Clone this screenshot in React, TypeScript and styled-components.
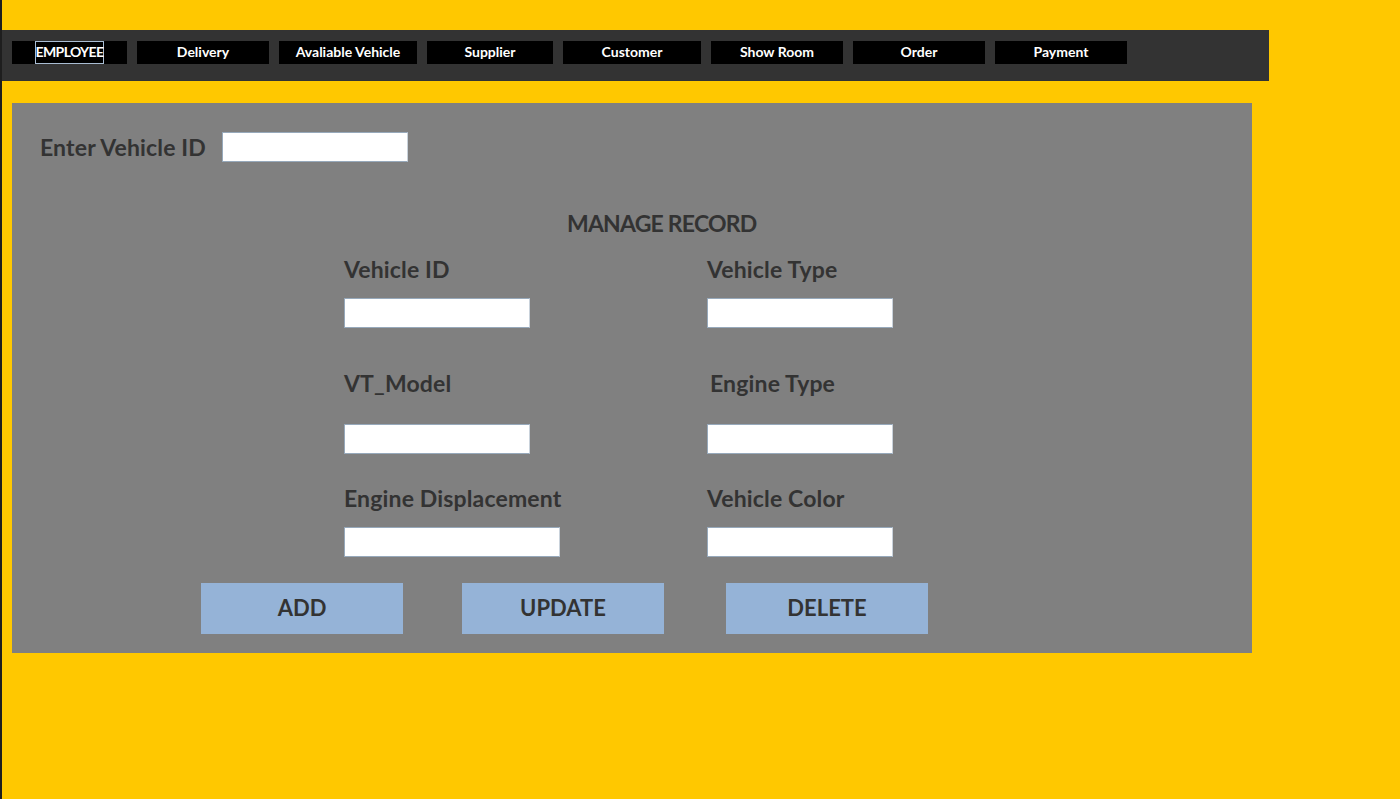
import React from "react";
import styled, { createGlobalStyle } from "styled-components";

const Global = createGlobalStyle`
  html, body { margin: 0; padding: 0; background: #ffffff; }
  body { font-family: Lato, "Open Sans", sans-serif; }
  * { box-sizing: border-box; }
`;

const Page = styled.div`
  display: flex;
  width: 1400px;
  height: 799px;
  overflow: hidden;
`;

const EdgeStrip = styled.div`
  width: 2px;
  height: 100%;
  background: #1e1e1e;
`;

const Canvas = styled.div`
  flex: 1;
  height: 100%;
  background: #ffc800;
  padding-top: 30px;
`;

const TopBar = styled.nav`
  width: 1267px;
  height: 51px;
  background: #333333;
  display: flex;
  align-items: flex-start;
  padding: 11px 0 0 10px;
`;

const NavButton = styled.div<{ $w: number; $ml: number }>`
  width: ${(p) => p.$w}px;
  height: 23px;
  margin-left: ${(p) => p.$ml}px;
  background: #000000;
  color: #ffffff;
  font-family: Lato, sans-serif;
  font-weight: 700;
  font-size: 14px;
  display: flex;
  align-items: center;
  justify-content: center;
  padding-bottom: 3px;
`;

const FocusText = styled.span`
  height: 23px;
  margin-bottom: -3px;
  display: flex;
  align-items: center;
  padding: 0 0 3px;
  border: 1px solid #a9bdd3;
  letter-spacing: -0.6px;
`;

const Panel = styled.section`
  width: 1240px;
  height: 550px;
  margin: 22px 0 0 10px;
  background: #808080;
  padding-top: 29px;
  color: #333333;
  font-family: Lato, sans-serif;
  font-weight: 700;
`;

const SearchRow = styled.div`
  display: flex;
  align-items: center;
  gap: 16px;
  padding-left: 28px;
  height: 30px;
`;

const BigLabel = styled.div`
  font-size: 23px;
  line-height: 26px;
  letter-spacing: 0.15px;
`;

const TextBox = styled.div<{ $w: number }>`
  width: ${(p) => p.$w}px;
  height: 30px;
  background: #ffffff;
  border: 1px solid #97a9bb;
  border-right-color: #c9d2db;
`;

const Title = styled.h2`
  margin: 0;
  margin-top: 48px;
  padding-left: 555px;
  font-size: 23px;
  line-height: 26px;
  font-weight: 700;
  letter-spacing: -0.8px;
`;

const FieldGrid = styled.div`
  display: grid;
  grid-template-columns: 363px 363px;
  margin-left: 332px;
  margin-top: 20px;
`;

const Field = styled.div<{ $gap: number; $indent: number; $mt: number }>`
  display: flex;
  flex-direction: column;
  align-items: flex-start;
  margin-top: ${(p) => p.$mt}px;
  & > ${BigLabel} {
    margin-left: ${(p) => p.$indent}px;
    margin-bottom: ${(p) => p.$gap}px;
  }
`;

const ButtonRow = styled.div`
  display: flex;
  margin-left: 189px;
  margin-top: 26px;
`;

const ActionButton = styled.button<{ $ml: number }>`
  width: 202px;
  height: 51px;
  margin-left: ${(p) => p.$ml}px;
  border: none;
  background: #95b3d7;
  color: #333333;
  font-family: Lato, sans-serif;
  font-weight: 700;
  font-size: 22px;
  padding: 0 0 2px;
`;

const navItems = [
  { label: "EMPLOYEE", w: 115, ml: 0 },
  { label: "Delivery", w: 132, ml: 10 },
  { label: "Avaliable Vehicle", w: 138, ml: 10 },
  { label: "Supplier", w: 126, ml: 10 },
  { label: "Customer", w: 138, ml: 10 },
  { label: "Show Room", w: 132, ml: 10 },
  { label: "Order", w: 132, ml: 10 },
  { label: "Payment", w: 132, ml: 10 },
];

const fields = [
  { label: "Vehicle ID", w: 186, gap: 16, indent: 0, mt: 0 },
  { label: "Vehicle Type", w: 186, gap: 16, indent: 0, mt: 0 },
  { label: "VT_Model", w: 186, gap: 28, indent: 0, mt: 42 },
  { label: "Engine Type", w: 186, gap: 28, indent: 3, mt: 42 },
  { label: "Engine Displacement", w: 216, gap: 16, indent: 0, mt: 31 },
  { label: "Vehicle Color", w: 186, gap: 16, indent: 0, mt: 31 },
];

export default function App() {
  return (
    <>
      <Global />
      <Page>
        <EdgeStrip />
        <Canvas>
          <TopBar>
            {navItems.map((n, i) => (
              <NavButton key={n.label} $w={n.w} $ml={n.ml}>
                {i === 0 ? <FocusText>{n.label}</FocusText> : n.label}
              </NavButton>
            ))}
          </TopBar>
          <Panel>
            <SearchRow>
              <BigLabel>Enter Vehicle ID</BigLabel>
              <TextBox $w={186} />
            </SearchRow>
            <Title>MANAGE RECORD</Title>
            <FieldGrid>
              {fields.map((f) => (
                <Field key={f.label} $gap={f.gap} $indent={f.indent} $mt={f.mt}>
                  <BigLabel>{f.label}</BigLabel>
                  <TextBox $w={f.w} />
                </Field>
              ))}
            </FieldGrid>
            <ButtonRow>
              <ActionButton $ml={0}>ADD</ActionButton>
              <ActionButton $ml={59}>UPDATE</ActionButton>
              <ActionButton $ml={62}>DELETE</ActionButton>
            </ButtonRow>
          </Panel>
        </Canvas>
      </Page>
    </>
  );
}
